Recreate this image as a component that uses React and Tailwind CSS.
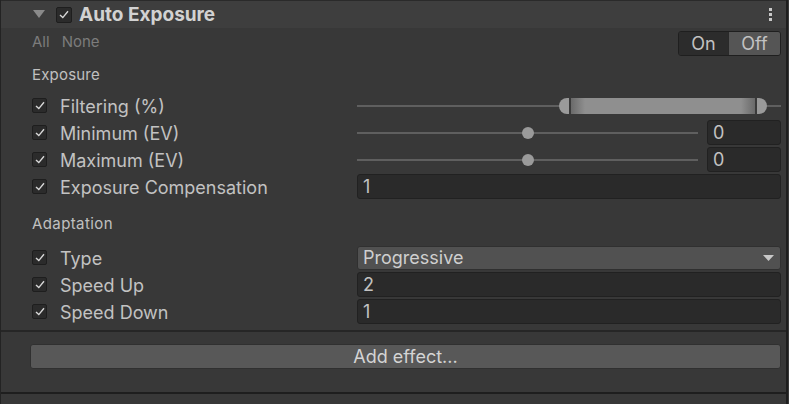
import React from "react";

const Check = ({ size = 15 }) => (
  <div
    className="flex items-center justify-center rounded-[2px] border border-[#1e1e1e] bg-[#2b2b2b]"
    style={{ width: size, height: size }}
  >
    <svg width="10" height="9" viewBox="0 0 10 9">
      <path d="M1 5 L3.8 7.6 L9 1.2" fill="none" stroke="#d8d8d8" strokeWidth="1.4" />
    </svg>
  </div>
);

const NumberField = ({ value, className = "" }) => (
  <div
    className={`flex h-[25px] items-center rounded-[3px] border border-[#212121] bg-[#2a2a2a] pl-[5px] text-[18px] text-[#c2c2c2] ${className}`}
  >
    {value}
  </div>
);

const Slider = () => (
  <div className="flex h-full items-center gap-[9px]">
    <div className="relative h-[2px] w-[341px] bg-[#5f5f5f]">
      <div className="absolute left-[165px] top-[-5px] h-[12px] w-[12px] rounded-full bg-[#9a9a9a]" />
    </div>
    <NumberField value="0" className="w-[74px]" />
  </div>
);

const RangeSlider = () => (
  <div className="relative flex h-full items-center">
    <div className="h-[2px] w-full bg-[#5f5f5f]" />
    <div className="absolute left-[202px] top-[6px] flex h-[16px] w-[208px] items-stretch">
      <div className="w-[10px] rounded-l-full bg-[#9a9a9a]" />
      <div className="w-[2px] bg-[#3a3a3a]" />
      <div className="w-[14px] bg-gradient-to-r from-[#6a6a6a] to-[#8f8f8f]" />
      <div className="flex-1 bg-[#8f8f8f]" />
      <div className="w-[14px] bg-gradient-to-l from-[#6a6a6a] to-[#8f8f8f]" />
      <div className="w-[2px] bg-[#3a3a3a]" />
      <div className="w-[10px] rounded-r-full bg-[#9a9a9a]" />
    </div>
  </div>
);

const Row = ({ label, children }) => (
  <div className="flex h-[27px] items-center">
    <div className="flex w-[325px] items-center">
      <Check />
      <span className="ml-[13px] pt-[1px] text-[18px] text-[#c2c2c2]">{label}</span>
    </div>
    <div className="h-full flex-1">{children}</div>
  </div>
);

const FullField = ({ value }) => (
  <div className="flex h-full items-center">
    <NumberField value={value} className="w-full" />
  </div>
);

export default function App() {
  return (
    <div
      className="flex h-[404px] w-[789px] overflow-hidden bg-[#383838]"
      style={{ fontFamily: "Inter, 'Noto Sans', sans-serif" }}
    >
      <div className="flex w-[786px] flex-col border-l border-[#232323]">
        {/* header */}
        <div className="flex h-[28px] items-center border-t border-[#2a2a2a] bg-[#3e3e3e] pl-[32px] pr-[14px]">
          <svg width="12" height="9" viewBox="0 0 12 9">
            <path d="M0 0 H12 L6 8 Z" fill="#8a8a8a" />
          </svg>
          <div className="ml-[11px]">
            <Check size={16} />
          </div>
          <span className="ml-[7px] pt-[2px] text-[19px] font-bold text-[#d2d2d2]">Auto Exposure</span>
          <div className="ml-auto flex flex-col gap-[2px]">
            <div className="h-[3px] w-[3px] bg-[#c8c8c8]" />
            <div className="h-[3px] w-[3px] bg-[#c8c8c8]" />
            <div className="h-[3px] w-[3px] bg-[#c8c8c8]" />
          </div>
        </div>

        <div className="flex flex-col pl-[31px] pr-[5px]">
          {/* All / None + toggle */}
          <div className="flex h-[30px] items-start">
            <div className="mt-[3px] flex gap-[12px] text-[15px] text-[#7c7c7c]">
              <span>All</span>
              <span>None</span>
            </div>
            <div className="ml-auto mt-[3px] flex h-[25px] overflow-hidden rounded-[3px] border border-[#1f1f1f] text-[18px] text-[#c2c2c2]">
              <div className="flex w-[49px] items-center justify-center bg-[#2c2c2c]">On</div>
              <div className="flex w-[52px] items-center justify-center border-l border-[#2a2a2a] bg-[#555555]">
                Off
              </div>
            </div>
          </div>

          <div className="flex h-[34px] items-center text-[15px] tracking-[0.2px] text-[#c0c0c0]">
            Exposure
          </div>

          <Row label="Filtering (%)">
            <RangeSlider />
          </Row>
          <Row label="Minimum (EV)">
            <Slider />
          </Row>
          <Row label="Maximum (EV)">
            <Slider />
          </Row>
          <Row label="Exposure Compensation">
            <FullField value="1" />
          </Row>

          <div className="flex h-[44px] items-center pt-[5px] text-[15px] tracking-[0.4px] text-[#c0c0c0]">
            Adaptation
          </div>

          <Row label="Type">
            <div className="flex h-full items-center">
              <div className="flex h-[24px] w-full items-center justify-between rounded-[3px] border border-[#303030] bg-[#515151] pl-[5px] pr-[6px] text-[18px] text-[#cfcfcf]">
                Progressive
                <svg width="11" height="6" viewBox="0 0 11 6">
                  <path d="M0 0 H11 L5.5 6 Z" fill="#c8c8c8" />
                </svg>
              </div>
            </div>
          </Row>
          <Row label="Speed Up">
            <FullField value="2" />
          </Row>
          <Row label="Speed Down">
            <FullField value="1" />
          </Row>
        </div>

        <div className="mt-[5px] h-[2px] bg-[#262626]" />

        <div className="mt-[12px] pl-[29px] pr-[5px]">
          <div className="flex h-[25px] items-center justify-center rounded-[3px] border border-[#303030] bg-[#585858] text-[18px] text-[#d4d4d4]">
            Add effect...
          </div>
        </div>

        <div className="mt-[23px] h-[2px] bg-[#1e1e1e]" />
      </div>
      <div className="w-[2px] bg-[#1e1e1e]" />
    </div>
  );
}
